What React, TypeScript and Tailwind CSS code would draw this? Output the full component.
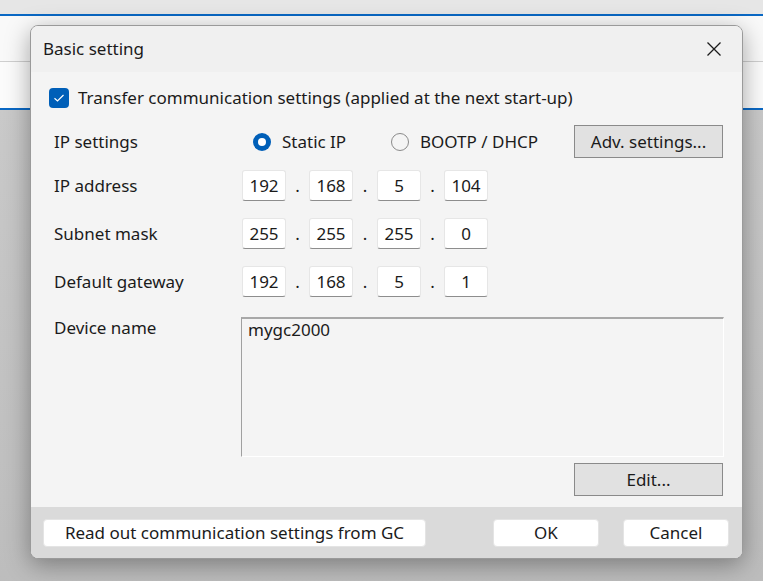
import React from "react";

const font = { fontFamily: '"Noto Sans", "Open Sans", Arial, sans-serif' };

function OctetRow({ values }: { values: string[] }) {
  return (
    <div className="flex items-center">
      {values.map((v, i) => (
        <React.Fragment key={i}>
          {i > 0 && (
            <span className={"flex justify-center text-[17px] " + (i === 2 ? "w-[24px]" : "w-[23px]")}>.</span>
          )}
          <div className="w-[44px] h-[31px] bg-white border border-[#e6e6e6] border-b-[#8d8d8d] rounded-[3px] flex items-center justify-center text-[17px]">
            {v}
          </div>
        </React.Fragment>
      ))}
    </div>
  );
}

function Row({ label, children, className = "" }: { label: string; children: React.ReactNode; className?: string }) {
  return (
    <div className={"flex items-center " + className}>
      <div className="w-[187px] pl-[23px] text-[17px]">{label}</div>
      {children}
    </div>
  );
}

export default function App() {
  return (
    <div className="relative w-[763px] h-[581px] overflow-hidden bg-[#c4c4c4] text-[#1b1b1b]" style={font}>
      {/* window behind the dialog */}
      <div className="h-[14px] bg-[#e6e6e6]" />
      <div className="h-[2px] bg-[#0a68c4]" />
      <div className="h-[46px] bg-[#f9f9f9] border-b border-[#cfcfcf]" />
      <div className="h-[46px] bg-[#fbfbfb]" />
      <div className="h-[2px] bg-[#0a68c4]" />
      <div className="h-full bg-gradient-to-b from-[#c9c9c9] to-[#bababa]" />

      {/* dialog */}
      <div className="absolute left-[30px] top-[25px] w-[713px] h-[534px] rounded-[8px] border border-[#9a9a9a] bg-[#f3f3f3] shadow-[0_6px_24px_rgba(0,0,0,0.35)] overflow-hidden flex flex-col">
        <div className="h-[46px] shrink-0 flex items-center justify-between bg-[#f0f0f0] pl-[12px] pr-[18px]">
          <span className="text-[17px]">Basic setting</span>
          <svg width="16" height="16" viewBox="0 0 16 16" className="mr-[2px]">
            <path d="M1.5 1.5 L14.5 14.5 M14.5 1.5 L1.5 14.5" stroke="#1b1b1b" strokeWidth="1.3" />
          </svg>
        </div>

        <div className="flex-1 bg-[#f4f4f4] flex flex-col pt-[16px]">
          <div className="flex items-center pl-[18px] h-[20px]">
            <div className="w-[20px] h-[20px] rounded-[4px] bg-[#005fb8] flex items-center justify-center">
              <svg width="12" height="10" viewBox="0 0 12 10">
                <path d="M1.5 5.2 L4.5 8 L10.5 2" fill="none" stroke="white" strokeWidth="1.2" />
              </svg>
            </div>
            <span className="ml-[9px] text-[17px]">Transfer communication settings (applied at the next start-up)</span>
          </div>

          <Row label="IP settings" className="mt-[17px] h-[33px]">
            <div className="flex items-center ml-[35px] w-[138px]">
              <div className="w-[18px] h-[18px] rounded-full bg-[#005fb8] flex items-center justify-center">
                <div className="w-[8px] h-[8px] rounded-full bg-white" />
              </div>
              <span className="ml-[11px] text-[17px]">Static IP</span>
            </div>
            <div className="flex items-center">
              <div className="w-[18px] h-[18px] rounded-full border border-[#8a8a8a] bg-[#f4f4f4]" />
              <span className="ml-[11px] text-[17px]">BOOTP / DHCP</span>
            </div>
            <button className="ml-auto mr-[19px] w-[149px] h-[33px] bg-[#e1e1e1] border border-[#8a8a8a] text-[17px]">
              Adv. settings...
            </button>
          </Row>

          <Row label="IP address" className="mt-[12px] h-[31px]">
            <div className="pl-[24px]">
              <OctetRow values={["192", "168", "5", "104"]} />
            </div>
          </Row>
          <Row label="Subnet mask" className="mt-[17px] h-[31px]">
            <div className="pl-[24px]">
              <OctetRow values={["255", "255", "255", "0"]} />
            </div>
          </Row>
          <Row label="Default gateway" className="mt-[17px] h-[31px]">
            <div className="pl-[24px]">
              <OctetRow values={["192", "168", "5", "1"]} />
            </div>
          </Row>

          <div className="flex mt-[20px]">
            <div className="w-[187px] pl-[23px] text-[17px] leading-[22px]">Device name</div>
            <div className="ml-[23px] w-[483px] h-[140px] border-t-2 border-l border-t-[#a8a8a8] border-l-[#a0a0a0] border-r border-b border-r-[#ffffff] border-b-[#ffffff] bg-[#f4f4f4] px-[6px] text-[17px] leading-[22px]">
              mygc2000
            </div>
          </div>

          <div className="flex justify-end mt-[6px] pr-[19px]">
            <button className="w-[149px] h-[33px] bg-[#e1e1e1] border border-[#8a8a8a] text-[17px]">Edit...</button>
          </div>
        </div>

        <div className="h-[51px] shrink-0 bg-[#dadada] flex items-center pl-[12px] pr-[13px]">
          <button className="w-[383px] h-[28px] bg-white rounded-[4px] border border-[#e4e4e4] text-[17px] leading-none">
            Read out communication settings from GC
          </button>
          <button className="ml-auto w-[106px] h-[28px] bg-white rounded-[4px] border border-[#e4e4e4] text-[17px] leading-none">OK</button>
          <button className="ml-[24px] w-[106px] h-[28px] bg-white rounded-[4px] border border-[#e4e4e4] text-[17px] leading-none">Cancel</button>
        </div>
      </div>
    </div>
  );
}
